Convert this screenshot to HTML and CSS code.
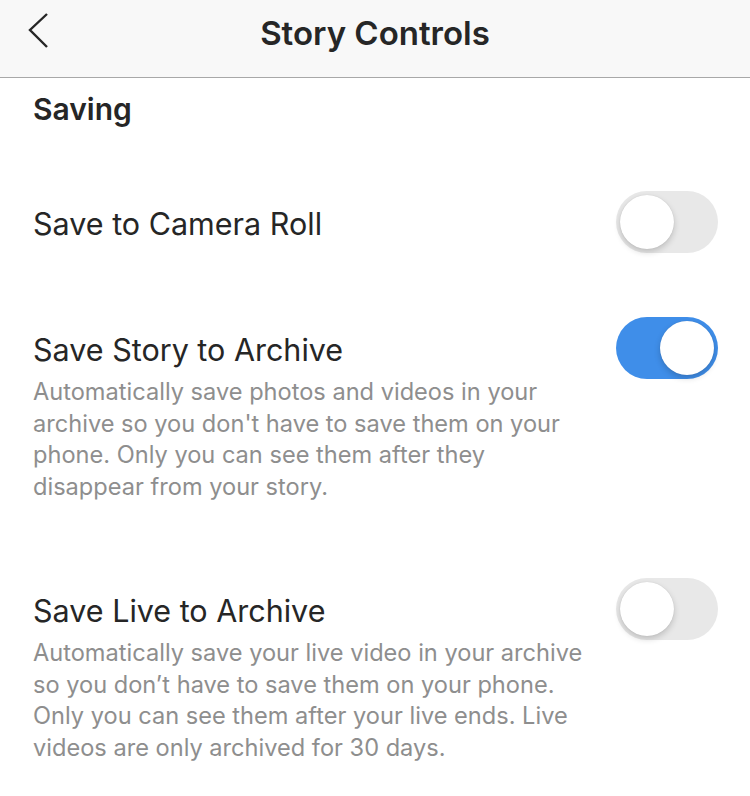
FILE: index.html
```html
<!DOCTYPE html>
<html lang="en">
<head>
    <meta charset="UTF-8">
    <meta name="viewport" content="width=device-width, initial-scale=1.0">
    <title>Story Controls</title>
    <link rel="stylesheet" href="styles.css">
</head>
<body>
    <header class="topbar">
        <button class="back" aria-label="Back">
            <svg width="24" height="40" viewBox="0 0 24 40">
                <polyline points="19,5 2,21 19,38" fill="none" stroke="#262626" stroke-width="2.4"/>
            </svg>
        </button>
        <h1>Story Controls</h1>
    </header>

    <main>
        <h2 class="group-title">Saving</h2>

        <div class="setting single">
            <div class="setting-text">
                <div class="setting-name">Save to Camera Roll</div>
            </div>
            <span class="toggle"><span class="knob"></span></span>
        </div>

        <div class="setting">
            <div class="setting-text">
                <div class="setting-name">Save Story to Archive</div>
                <p class="setting-desc">Automatically save photos and videos in your archive so you don't have to save them on your phone. Only you can see them after they disappear from your story.</p>
            </div>
            <span class="toggle on"><span class="knob"></span></span>
        </div>

        <div class="setting live">
            <div class="setting-text">
                <div class="setting-name">Save Live to Archive</div>
                <p class="setting-desc">Automatically save your live video in your archive so you don’t have to save them on your phone. Only you can see them after your live ends. Live videos are only archived for 30 days.</p>
            </div>
            <span class="toggle"><span class="knob"></span></span>
        </div>
    </main>
</body>
</html>
```

FILE: styles.css
```css
body {
    margin: 0;
    padding: 0;
    background-color: #ffffff;
    font-family: Inter, "Noto Sans", sans-serif;
    color: #262626;
}

.topbar {
    height: 77px;
    background-color: #f8f8f8;
    border-bottom: 1px solid #a8a8a8;
    display: flex;
    align-items: center;
    justify-content: center;
    position: relative;
}

.topbar h1 {
    margin: 0;
    font-size: 33px;
    font-weight: 600;
    padding-bottom: 12px;
}

.back {
    position: absolute;
    left: 28px;
    top: 9px;
    background: none;
    border: none;
    padding: 0;
}

main {
    padding: 0 32px 0 33px;
}

.group-title {
    margin: 0;
    padding-top: 13px;
    font-size: 30px;
    font-weight: 600;
    line-height: 36px;
}

.setting {
    display: flex;
    justify-content: space-between;
    align-items: flex-start;
}

.setting.single {
    margin-top: 64px;
    align-items: center;
}

.setting.single + .setting {
    margin-top: 64px;
}

.setting.live {
    margin-top: 76px;
}

.setting-text {
    flex: 1;
    padding-right: 22px;
}

.setting-name {
    font-size: 30.5px;
    line-height: 38px;
    margin-top: 14px;
}

.single .setting-name {
    margin-top: 4px;
}

.setting-desc {
    margin: 7px 0 0;
    font-size: 23.6px;
    line-height: 31.5px;
    color: #8e8e8e;
}

.toggle {
    flex: none;
    width: 102px;
    height: 62px;
    border-radius: 31px;
    background-color: #e8e8e8;
    position: relative;
}

.toggle.on {
    background-color: #3f8ee9;
}

.knob {
    position: absolute;
    top: 4px;
    left: 4px;
    width: 54px;
    height: 54px;
    border-radius: 50%;
    background-color: #ffffff;
    box-shadow: 0 3px 6px rgba(0, 0, 0, 0.18), 0 0 1px rgba(0, 0, 0, 0.15);
}

.toggle.on .knob {
    left: 44px;
}
```
